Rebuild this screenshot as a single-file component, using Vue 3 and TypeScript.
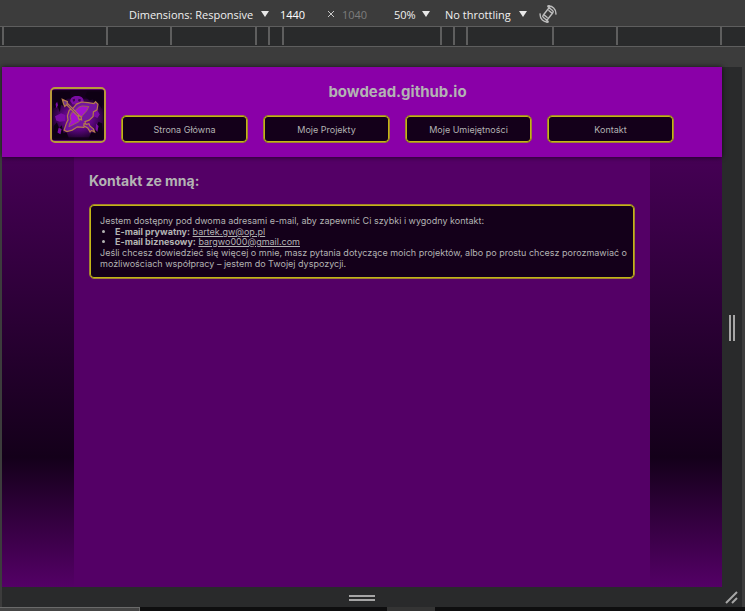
<script setup lang="ts">
import { ref } from 'vue'

interface NavItem {
  label: string
  href: string
}

const deviceWidth = ref('1440')
const deviceHeight = ref('1040')

// Free space between neighbouring breakpoint marks on the ruler
const rulerSegments: number[] = [102, 62, 83, 11, 12, 156, 11, 11, 84, 62, 102]

const navItems: NavItem[] = [
  { label: 'Strona Główna', href: '#home' },
  { label: 'Moje Projekty', href: '#projects' },
  { label: 'Moje Umiejętności', href: '#skills' },
  { label: 'Kontakt', href: '#contact' },
]
</script>

<template>
  <div class="devtools">
    <div class="toolbar">
      <span class="picker device">
        <select aria-label="Device">
          <option>Dimensions: Responsive</option>
        </select>
        <svg class="arrow" viewBox="0 0 8 6" aria-hidden="true"><path d="M0 0h8L4 6z" /></svg>
      </span>
      <input v-model="deviceWidth" class="size" type="text" aria-label="Width" />
      <svg class="times" viewBox="0 0 8 8" aria-hidden="true"><path d="M1 1l6 6M7 1L1 7" /></svg>
      <input v-model="deviceHeight" class="size muted" type="text" aria-label="Height" />
      <span class="picker zoom">
        <select aria-label="Zoom">
          <option>50%</option>
        </select>
        <svg class="arrow" viewBox="0 0 8 6" aria-hidden="true"><path d="M0 0h8L4 6z" /></svg>
      </span>
      <span class="picker throttle">
        <select aria-label="Throttling">
          <option>No throttling</option>
        </select>
        <svg class="arrow" viewBox="0 0 8 6" aria-hidden="true"><path d="M0 0h8L4 6z" /></svg>
      </span>
      <button class="rotate" type="button" aria-label="Rotate">
        <svg viewBox="0 0 18 18" aria-hidden="true">
          <rect x="6" y="3.4" width="6" height="11.2" rx="1.6" transform="rotate(38 9 9)" />
          <path d="M9.4 5.2l3.6 2.9M5 9.9l3.6 2.9" />
          <path d="M8.6 1.2C13 .2 17.6 4 16.8 9.6M8.4 1.2l3 2.4M8.4 1.2l2.4-.9" />
          <path d="M9.4 16.8C5 17.8.4 14 1.2 8.4M9.6 16.8l-3-2.4M9.6 16.8l-2.4.9" />
        </svg>
      </button>
    </div>

    <div class="ruler">
      <div class="marks">
        <span
          v-for="(segment, index) in rulerSegments"
          :key="index"
          class="segment"
          :style="{ flexGrow: segment }"
        ></span>
      </div>
    </div>

    <div class="stage">
      <div class="site">
        <header class="site-header">
          <svg class="logo" viewBox="28 20 172 168" role="img" aria-label="bowdead">
            <defs>
              <radialGradient id="glow" cx="50%" cy="50%" r="60%">
                <stop offset="0" stop-color="#9a0cc8" />
                <stop offset="0.5" stop-color="#5c0680" />
                <stop offset="1" stop-color="#12001a" />
              </radialGradient>
            </defs>
            <rect x="28" y="20" width="172" height="168" fill="#14001c" />
            <rect x="30" y="50" width="168" height="128" fill="url(#glow)" />
            <path
              fill="#0e0014"
              d="M34 26h54v20l-12 4-8 26-10-6-4 24-8-20-12 8zM194 26h-50l-6 16 14 14 12-4 8 24 8-12 14 20zM34 140l10-12 8 20 8-10 6 26 10-4 8 22H34zM194 132l-12-6-8 18-4 20-12-2-10 22h46z"
            />
            <path
              fill="#7a0ca4"
              d="M88 58c2-14 12-18 24-17 12 0 20 6 21 18l-10 10H96zM38 108l20-10 14 6v20l-18 2-12-4zM40 68l5-8 3 12-6 10zM168 92l10-4 8 14-8 12-12-6zM50 146l10 4-4 18-10-6zM174 132l8 8-4 20-6-8z"
            />
            <path fill="#3c0450" d="M96 52l8-2v8l-6 2zM116 50l8 3-3 7-7-2z" />
            <path
              class="bow"
              d="M172 60l-5 6-20-3-21-2-17 7-11 13-13 7-6 19 2 13-5 10-8 24 9 5 18-5 17-11 21 2 8-8-4-11 14-5 13-12 1-15 12-7 3-19z"
            />
            <path
              class="belly"
              d="M150 76l-22-2-12 4-12 12-12 7-4 12 3 14-5 10-2 10 18-9 15-8 12-20 14-16z"
            />
            <path class="bow" d="M134 132l8 3 8-2 4 8 11 9 4 10-10-5-5 5-8-13-13-7z" />
            <path class="shaft" d="M76 66l44 45" />
            <path class="shaft-core" d="M76 66l44 45" />
            <path class="tip" d="M62 52l17 8-1 9-8 7-4-10z" />
            <path class="tip" d="M114 106l10 3 2 11-10-3z" />
          </svg>
          <div class="masthead">
            <h1>bowdead.github.io</h1>
            <nav class="nav">
              <a v-for="item in navItems" :key="item.href" :href="item.href">{{ item.label }}</a>
            </nav>
          </div>
        </header>

        <main class="content">
          <h2>Kontakt ze mną:</h2>
          <section class="card">
            <p>Jestem dostępny pod dwoma adresami e-mail, aby zapewnić Ci szybki i wygodny kontakt:</p>
            <ul>
              <li><b>E-mail prywatny:</b> <a href="mailto:bartek.gw@op.pl">bartek.gw@op.pl</a></li>
              <li><b>E-mail biznesowy:</b> <a href="mailto:bargwo000@gmail.com">bargwo000@gmail.com</a></li>
            </ul>
            <p>
              Jeśli chcesz dowiedzieć się więcej o mnie, masz pytania dotyczące moich projektów, albo po
              prostu chcesz porozmawiać o możliwościach współpracy – jestem do Twojej dyspozycji.
            </p>
          </section>
        </main>
      </div>
      <div class="handle-right"><span class="grip vertical"></span></div>
      <div class="handle-bottom"><span class="grip horizontal"></span></div>
      <div class="handle-corner">
        <svg viewBox="0 0 14 14" aria-hidden="true"><path d="M1 12L12 1M7 12l5-5" /></svg>
      </div>
    </div>

    <div class="drawer">
      <span class="drawer-tab"></span>
      <span class="drawer-thumb"></span>
    </div>
  </div>
</template>

<style>
body {
  margin: 0;
  background: #3c3c3c;
}
</style>

<style scoped>
* {
  box-sizing: border-box;
}

.devtools {
  display: flex;
  flex-direction: column;
  min-height: 100vh;
  background: #3c3c3c;
  font-family: 'Open Sans', 'Noto Sans', sans-serif;
}

.toolbar {
  display: flex;
  align-items: center;
  height: 26px;
  padding: 2px 0 0 129px;
  font-size: 11px;
  color: #f0f0f0;
}

.picker {
  display: flex;
  flex: none;
  align-items: center;
  justify-content: space-between;
}

.picker select {
  appearance: none;
  margin: 0;
  padding: 0;
  border: 0;
  background: none;
  color: inherit;
  font: inherit;
}

.arrow {
  width: 8px;
  height: 6px;
  fill: #e8e8e8;
}

.size {
  width: 47px;
  margin-left: 11px;
  padding: 0;
  border: 0;
  background: none;
  color: #ffffff;
  font: inherit;
}

.size.muted {
  width: 42px;
  margin-left: 7px;
  color: #7c7c7c;
}

.times {
  width: 8px;
  height: 8px;
  fill: none;
  stroke: #c8c8c8;
}

.device {
  width: 140px;
}

.zoom {
  width: 36px;
  margin-left: 10px;
}

.throttle {
  width: 82px;
  margin-left: 15px;
}

.rotate {
  flex: none;
  width: 18px;
  height: 18px;
  margin-left: 12px;
  padding: 0;
  border: 0;
  background: none;
}

.rotate svg {
  display: block;
  fill: none;
  stroke: #bdbdbd;
  stroke-width: 1.4;
}

.ruler {
  height: 21px;
  padding: 0 23px 0 2px;
  border-top: 1px solid #5e5e5e;
  border-bottom: 1px solid #5e5e5e;
  background: #292a2b;
}

.marks {
  display: flex;
  height: 18px;
  border-right: 2px solid #5e5e5e;
}

.segment {
  flex: 1 1 0;
  border-left: 2px solid #5e5e5e;
}

.stage {
  display: grid;
  flex: 1;
  grid-template-columns: 1fr 20px;
  grid-template-rows: 1fr 20px;
  margin: 20px 3px 0 2px;
  background: #292a2b;
}

.site {
  display: flex;
  flex-direction: column;
  background: linear-gradient(#540066, #14001a 75%, #540066);
  color: #b3b3b3;
  font-family: Inter, 'Liberation Sans', sans-serif;
}

.site-header {
  z-index: 1;
  display: flex;
  align-items: flex-end;
  gap: 15px;
  padding: 15px 48px 14px;
  background: #8a00a8;
  box-shadow: 0 0 5px rgb(0 0 0 / 70%);
}

.logo {
  flex: none;
  width: 56px;
  height: 56px;
  border: 2px solid #b89b3a;
  border-radius: 5px;
}

.bow {
  fill: #7416a0;
  stroke: #b57b4c;
  stroke-width: 4;
}

.belly {
  fill: #a312cf;
  stroke: #a0674e;
  stroke-width: 3;
}

.shaft {
  fill: none;
  stroke: #b57b4c;
  stroke-width: 9;
}

.shaft-core {
  fill: none;
  stroke: #6c2a80;
  stroke-width: 3;
}

.tip {
  fill: #70358a;
  stroke: #b57b4c;
  stroke-width: 4;
}

.masthead {
  flex: 1;
}

h1,
h2,
p,
ul {
  margin: 0;
}

h1 {
  margin-bottom: 13px;
  font-size: 15px;
  line-height: 20px;
  text-align: center;
}

.nav {
  display: grid;
  grid-template-columns: repeat(4, 1fr);
  gap: 15px;
}

.nav a,
.card {
  border: 1px solid #a28432;
  border-radius: 5px;
  background: #14001a;
  box-shadow: inset 0 0 0 1px #c4b616;
  font-size: 9px;
}

.nav a {
  padding: 8px 0 6px;
  color: inherit;
  line-height: 12px;
  text-align: center;
  text-decoration: none;
}

.content {
  flex: 1;
  width: 80%;
  margin: 0 auto;
  padding: 15px;
  background: #540066;
}

h2 {
  margin-bottom: 14px;
  font-size: 14px;
  line-height: 18px;
}

.card {
  padding: 10px 6px 9px 10px;
  line-height: 11px;
}

.card ul {
  padding: 1px 0 0 15px;
}

.card li {
  line-height: 10px;
}

.card a {
  color: inherit;
}

.handle-right,
.handle-bottom,
.handle-corner {
  display: flex;
  align-items: center;
  justify-content: center;
  padding-top: 2px;
}

.grip.vertical {
  width: 6px;
  height: 26px;
  border: solid #a6a6a6;
  border-width: 0 2px;
}

.grip.horizontal {
  width: 26px;
  height: 6px;
  border: solid #a6a6a6;
  border-width: 2px 0;
}

.handle-corner svg {
  width: 14px;
  height: 14px;
  fill: none;
  stroke: #a6a6a6;
  stroke-width: 2;
}

.drawer {
  display: grid;
  grid-template-columns: 140fr 247fr 48fr 310fr;
  height: 4px;
  background: #0e0e0f;
}

.drawer-tab {
  border-top: 1px solid #6a6a6a;
  border-right: 1px solid #6a6a6a;
  background: #454545;
}

.drawer-thumb {
  grid-column: 3;
  background: #343434;
}
</style>
